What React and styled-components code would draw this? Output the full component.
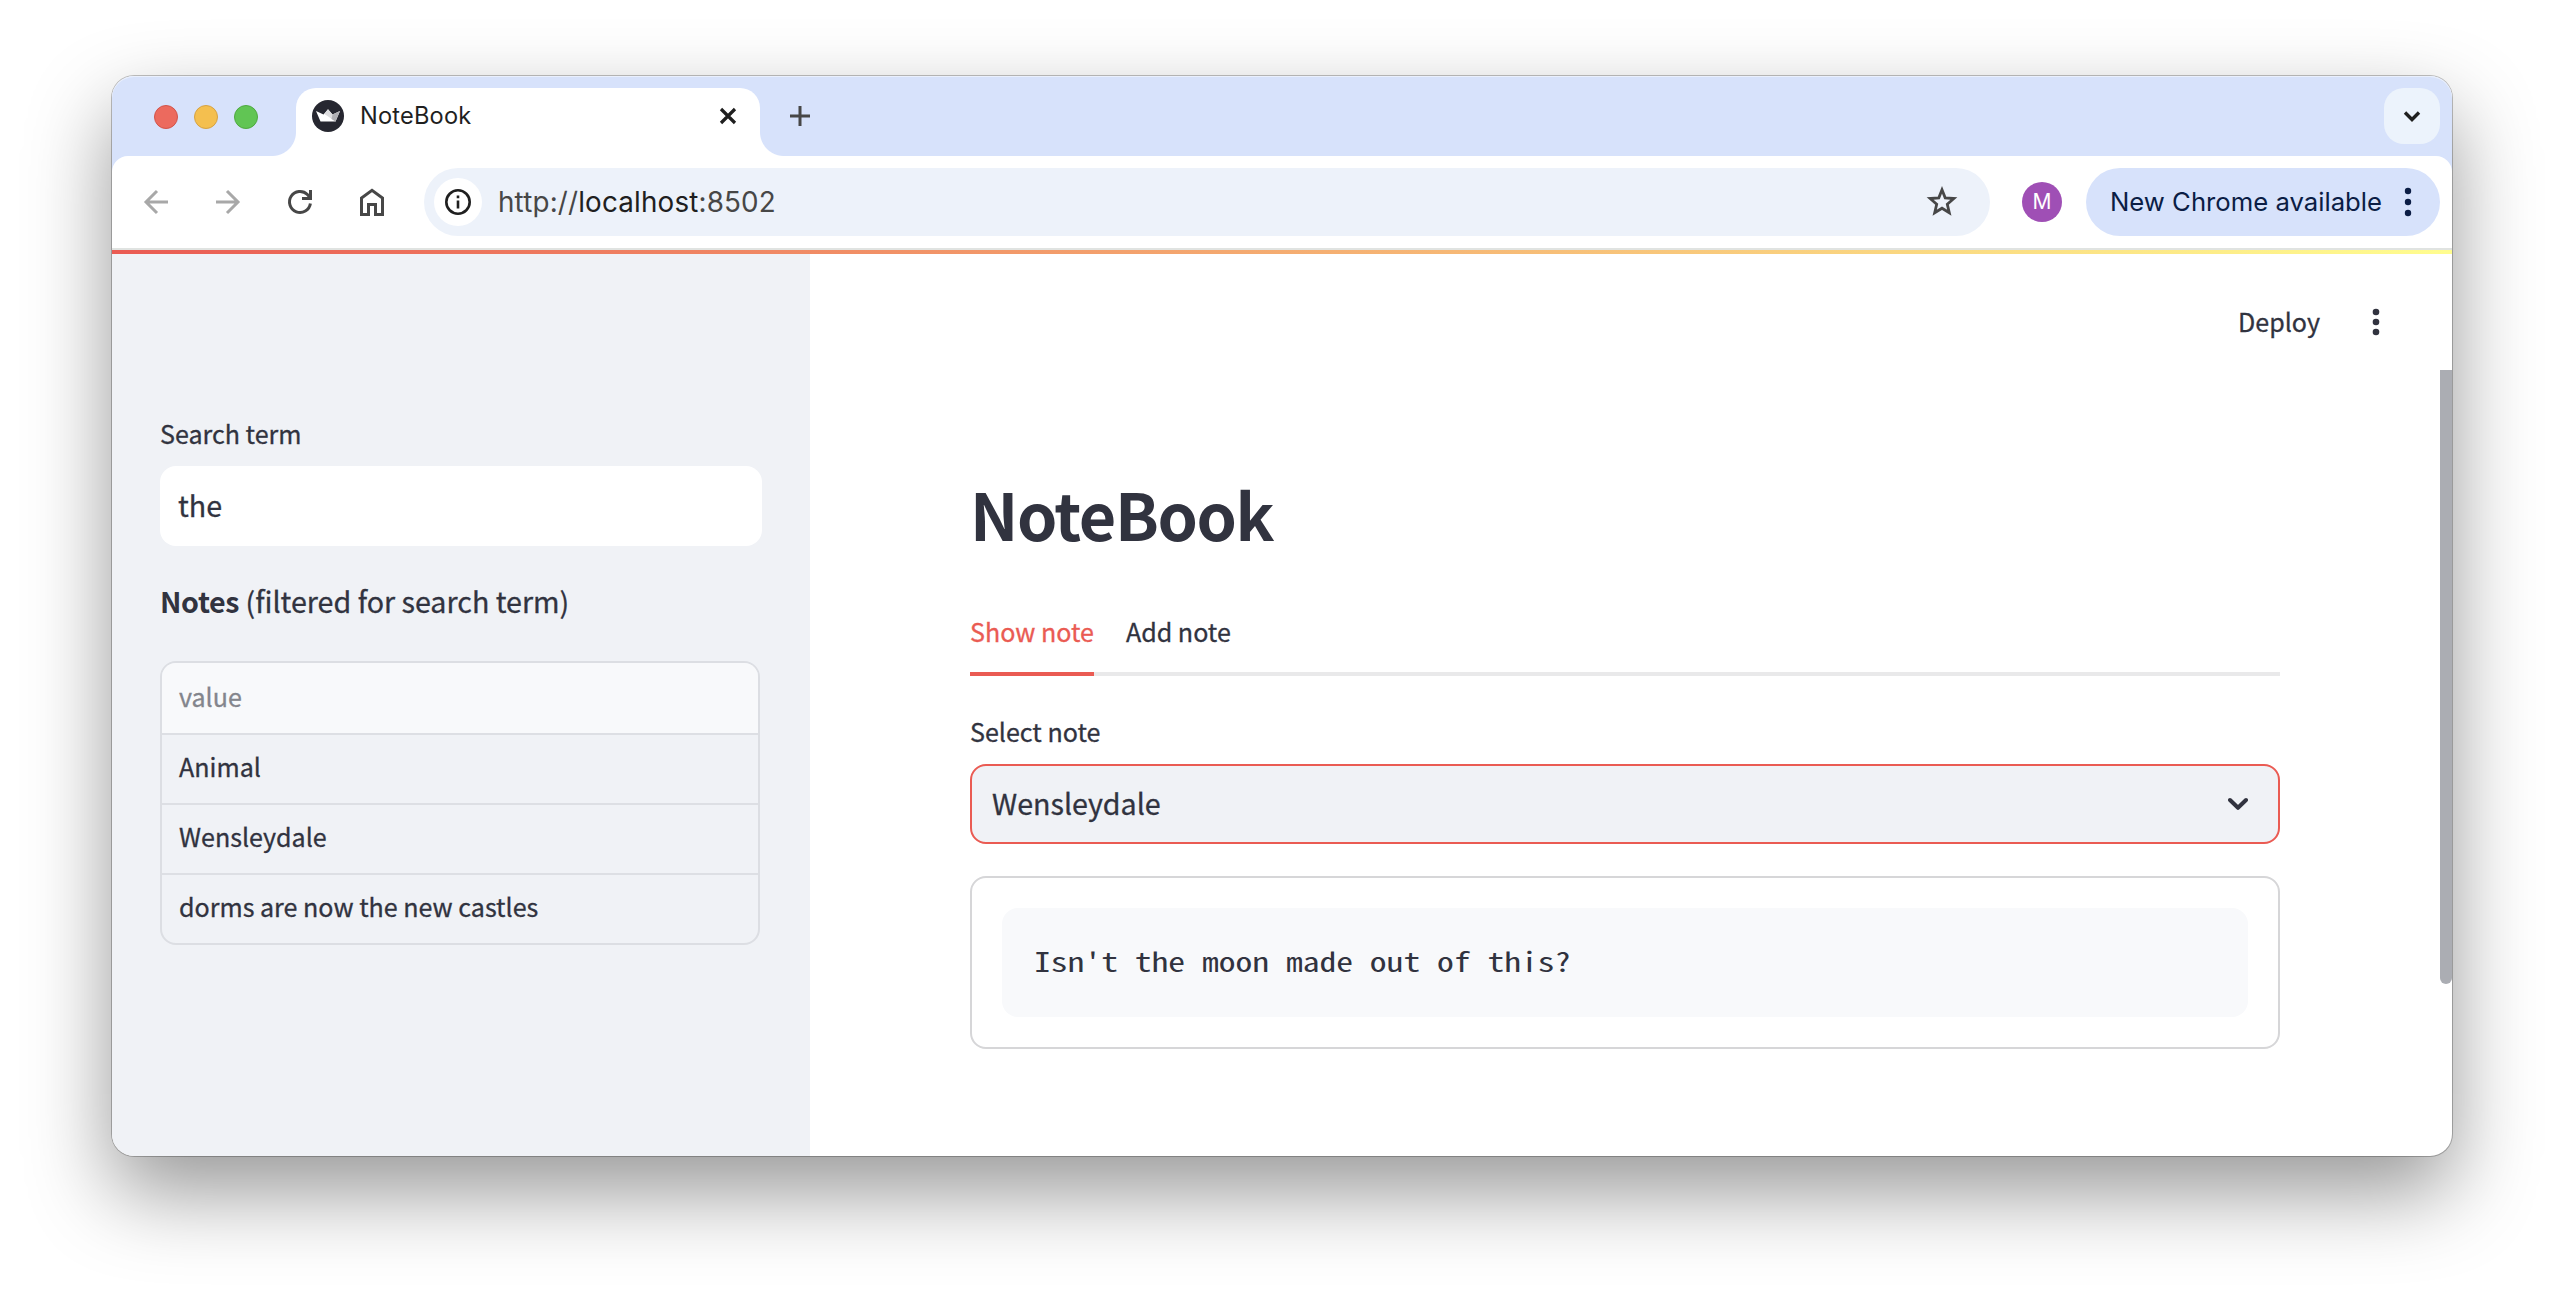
import React from "react";
import styled, { createGlobalStyle, css } from "styled-components";

const ui = `Inter, "Liberation Sans", sans-serif`;
const body = `"Noto Sans CJK SC", "Noto Sans", sans-serif`;
const mono = `"Noto Sans Mono CJK SC", "DejaVu Sans Mono", monospace`;

const ink = "#31333f";
const red = "#ea5b53";
const panel = "#f0f2f6";

const Global = createGlobalStyle`
  *, *::before, *::after { box-sizing: border-box; }
  html, body { margin: 0; background: #fff; }
`;

const Desktop = styled.div`
  width: 2564px;
  height: 1304px;
  padding: 76px 112px 0;
  overflow: hidden;
  background: #fff;
`;

const Window = styled.div`
  display: flex;
  flex-direction: column;
  height: 1080px;
  border-radius: 22px;
  background: #fff;
  box-shadow: 0 0 0 1px rgba(0, 0, 0, 0.24), 0 36px 84px rgba(0, 0, 0, 0.41);
`;

const TabStrip = styled.div`
  display: flex;
  height: 80px;
  padding: 12px 12px 0 42px;
  border-radius: 22px 22px 0 0;
  background: #d7e2fb;
  box-shadow: inset 0 1px 0 #eaf0fd;
`;

const Lights = styled.div`
  display: flex;
  gap: 16px;
  margin-top: 17px;
  width: 142px;
`;

const Light = styled.span`
  width: 24px;
  height: 24px;
  border-radius: 50%;
  background: ${(p) => p.$fill};
  border: 1px solid ${(p) => p.$edge};
`;

const foot = css`
  content: "";
  position: absolute;
  bottom: 0;
  width: 24px;
  height: 24px;
`;

const BrowserTab = styled.div`
  position: relative;
  display: flex;
  align-items: flex-start;
  width: 464px;
  height: 68px;
  padding: 12px 22px 0 16px;
  border-radius: 20px 20px 0 0;
  background: #fff;
  &::before {
    ${foot}
    left: -24px;
    background: radial-gradient(circle at 0 0, transparent 23.5px, #fff 24.5px);
  }
  &::after {
    ${foot}
    right: -24px;
    background: radial-gradient(circle at 100% 0, transparent 23.5px, #fff 24.5px);
  }
`;

const TabTitle = styled.span`
  flex: 1;
  margin-left: 16px;
  font: 400 23.6px/32px ${ui};
  letter-spacing: 0.2px;
  color: #1f1f1f;
`;

const CloseIcon = styled.svg`
  margin-top: 6px;
`;

const NewTab = styled.button`
  display: flex;
  padding: 0;
  margin: 18px auto 0 30px;
  height: 20px;
  border: 0;
  background: none;
`;

const TabSearch = styled.button`
  display: flex;
  align-items: center;
  justify-content: center;
  width: 56px;
  height: 56px;
  padding: 0;
  border: 0;
  border-radius: 20px;
  background: #ecf3fc;
`;

const ToolbarBack = styled.div`
  background: #d7e2fb;
`;

const Toolbar = styled.div`
  display: flex;
  align-items: center;
  height: 92px;
  padding: 0 12px 0 28px;
  border-radius: 16px 16px 0 0;
  background: #fff;
`;

const NavButtons = styled.div`
  display: flex;
  gap: 40px;
  width: 284px;
`;

const Address = styled.div`
  display: flex;
  align-items: center;
  width: 1566px;
  height: 68px;
  padding: 0 32px 0 10px;
  border-radius: 34px;
  background: #edf2fa;
`;

const SiteInfo = styled.span`
  display: flex;
  align-items: center;
  justify-content: center;
  width: 48px;
  height: 48px;
  border-radius: 50%;
  background: #fff;
`;

const Url = styled.span`
  flex: 1;
  margin-left: 16px;
  font: 400 27.8px/36px ${ui};
  letter-spacing: 0.17px;
  color: #474747;
`;

const Host = styled.span`
  color: #1f1f1f;
`;

const Avatar = styled.span`
  width: 40px;
  height: 40px;
  margin: 0 24px 0 32px;
  border-radius: 50%;
  background: #9f4fb5;
  color: #fff;
  text-align: center;
  font: 400 21px/40px ${ui};
`;

const UpdatePill = styled.button`
  display: flex;
  align-items: center;
  justify-content: space-between;
  width: 354px;
  height: 68px;
  padding: 0 28px 0 24px;
  border: 0;
  border-radius: 34px;
  background: #d7e2fb;
  color: #0b1d45;
  font: 400 25.7px/34px ${ui};
  white-space: nowrap;
`;

const Separator = styled.div`
  height: 2px;
  background: #e0e3e1;
`;

const Decoration = styled.div`
  height: 4px;
  background: linear-gradient(90deg, #ea5b53, #fffd8f);
`;

const Page = styled.div`
  display: flex;
  height: 902px;
  -webkit-text-stroke: 0.3px;
`;

const Sidebar = styled.aside`
  width: 698px;
  padding: 160px 48px 0;
  border-radius: 0 0 0 22px;
  background: ${panel};
  color: ${ink};
`;

const Label = styled.label`
  display: block;
  font: 400 25.07px/38px ${body};
  color: ${ink};
`;

const Input = styled.div`
  height: 80px;
  margin-top: 14px;
  padding: 0 18px;
  border-radius: 16px;
  background: #fff;
  font: 400 28.65px/77px ${body};
`;

const Caption = styled.p`
  margin: 31px 0 0;
  font: 400 28.65px/48px ${body};
  b { font-weight: 700; letter-spacing: -0.35px; -webkit-text-stroke: 0; }
`;

const Table = styled.div`
  width: 600px;
  height: 284px;
  margin-top: 36px;
  border: 2px solid #dcdee3;
  border-radius: 16px;
  overflow: hidden;
`;

const Row = styled.div`
  height: ${(p) => (p.$head ? 72 : 70)}px;
  padding: 0 17px;
  border-bottom: 2px solid #dddfe4;
  background: ${(p) => (p.$head ? "#f8f9fb" : "transparent")};
  color: ${(p) => (p.$head ? "#83858c" : ink)};
  font: 400 25.07px/${(p) => (p.$head ? 66 : 62)}px ${body};
  &:last-child { border-bottom: 0; }
`;

const Main = styled.main`
  flex: 1;
  display: flex;
  padding: 0 0 0 160px;
`;

const Content = styled.div`
  width: 1310px;
`;

const AppHeader = styled.header`
  display: flex;
  align-items: center;
  justify-content: flex-end;
  gap: 46px;
  height: 60px;
  margin: 38px -106px 0 0;
  color: ${ink};
`;

const Deploy = styled.span`
  padding-bottom: 2px;
  font: 400 25.07px/40px ${body};
`;

const Title = styled.h1`
  margin: 124px 0 0;
  font: 700 64.6px/75px ${body};
  letter-spacing: -1.4px;
  color: ${ink};
  -webkit-text-stroke: 0;
`;

const Tabs = styled.div`
  display: flex;
  gap: 32px;
  height: 80px;
  margin-top: 45px;
  box-shadow: inset 0 -4px 0 #e9e9ea;
`;

const PageTab = styled.div`
  height: 80px;
  font: 400 25.07px/70px ${body};
  color: ${(p) => (p.$active ? red : ink)};
  box-shadow: ${(p) => (p.$active ? `inset 0 -4px 0 ${red}` : "none")};
`;

const SelectLabel = styled(Label)`
  margin-top: 36px;
`;

const Select = styled.div`
  display: flex;
  align-items: center;
  justify-content: space-between;
  height: 80px;
  margin-top: 14px;
  padding: 0 30px 0 20px;
  border: 2px solid ${red};
  border-radius: 16px;
  background: ${panel};
  color: ${ink};
`;

const SelectValue = styled.span`
  padding-bottom: 3px;
  font: 400 28.65px/64px ${body};
`;

const Card = styled.div`
  height: 173px;
  margin-top: 32px;
  padding: 30px;
  border: 2px solid #d6d6d8;
  border-radius: 16px;
`;

const Code = styled.pre`
  height: 109px;
  margin: 0;
  padding: 0 32px;
  border-radius: 16px;
  background: #f8f9fb;
  color: ${ink};
  font: 400 26.4px/105px ${mono};
`;

const CodeText = styled.code`
  display: inline-block;
  font: inherit;
  transform: scaleX(1.2727);
  transform-origin: 0 50%;
  -webkit-text-stroke: 0;
`;

const ScrollThumb = styled.div`
  width: 12px;
  height: 614px;
  margin: 116px 0 0 auto;
  border-radius: 0 0 6px 6px;
  background: #abadb3;
`;

const rows = ["Animal", "Wensleydale", "dorms are now the new castles"];

const Nav = ({ children }) => (
  <svg width="32" height="32" viewBox="0 0 32 32" fill="none" strokeWidth="3">
    {children}
  </svg>
);

export default function App() {
  return (
    <Desktop>
      <Global />
      <Window>
        <TabStrip>
          <Lights>
            <Light $fill="#ec6a5e" $edge="#d2544a" />
            <Light $fill="#f4bf4f" $edge="#d6a243" />
            <Light $fill="#61c554" $edge="#4fa940" />
          </Lights>
          <BrowserTab>
            <svg width="32" height="32" viewBox="0 0 32 32">
              <circle cx="16" cy="16" r="16" fill="#262730" />
              <path d="M4 11l7.500 3.500L16 9.300l4.500 5.200L28 11l-4.500 10.500h-15z" fill="#fff" />
              <path d="M16 9.300l4.500 5.200 3 7L12.500 14z" fill="#dcdcde" />
              <path d="M28 11l-7.500 3.500-1 4.500 4 2.500z" fill="#b0b0b4" />
            </svg>
            <TabTitle>NoteBook</TabTitle>
            <CloseIcon width="20" height="20" viewBox="0 0 20 20" stroke="#1f1f1f" strokeWidth="3.200">
              <path d="M3 3l14 14M17 3L3 17" />
            </CloseIcon>
          </BrowserTab>
          <NewTab>
            <svg width="20" height="20" viewBox="0 0 20 20" stroke="#474747" strokeWidth="3">
              <path d="M10 0v20M0 10h20" />
            </svg>
          </NewTab>
          <TabSearch>
            <svg width="20" height="20" viewBox="0 0 20 20" fill="none" stroke="#1f1f1f" strokeWidth="3.400">
              <path d="M3 6.500l7 7 7-7" />
            </svg>
          </TabSearch>
        </TabStrip>
        <ToolbarBack>
          <Toolbar>
            <NavButtons>
              <Nav><path stroke="#a8a8a8" d="M28 16H6.500M17 5L6 16l11 11" /></Nav>
              <Nav><path stroke="#a8a8a8" d="M4 16h21.500M15 5l11 11-11 11" /></Nav>
              <Nav>
                <path stroke="#474747" d="M26.400 17.500a10.500 10.500 0 1 1-3-9L26 11.500M26.500 4v8.500H18" />
              </Nav>
              <Nav>
                <path stroke="#474747" d="M5.500 28.500V12L16 4.300 26.500 12v16.500h-7V18.500h-7v10z" />
              </Nav>
            </NavButtons>
            <Address>
              <SiteInfo>
                <svg width="28" height="28" viewBox="0 0 28 28" fill="none" stroke="#1f1f1f" strokeWidth="2.600">
                  <circle cx="14" cy="14" r="11.700" />
                  <path d="M14 12.500v8M14 7.500v2.800" />
                </svg>
              </SiteInfo>
              <Url>http://<Host>localhost</Host>:8502</Url>
              <svg width="32" height="32" viewBox="0 0 32 32" fill="none" stroke="#474747" strokeWidth="2.800">
                <path d="M16 3.800l3.200 8 8.700.7-6.600 5.700 2 8.500L16 22.200l-7.300 4.500 2-8.500-6.600-5.700 8.700-.7z" />
              </svg>
            </Address>
            <Avatar>M</Avatar>
            <UpdatePill>
              New Chrome available
              <svg width="8" height="32" viewBox="0 0 8 32" fill="#0b1d45">
                <circle cx="4" cy="5" r="3.200" />
                <circle cx="4" cy="16" r="3.200" />
                <circle cx="4" cy="27" r="3.200" />
              </svg>
            </UpdatePill>
          </Toolbar>
        </ToolbarBack>
        <Separator />
        <Decoration />
        <Page>
          <Sidebar>
            <Label>Search term</Label>
            <Input>the</Input>
            <Caption><b>Notes</b> (filtered for search term)</Caption>
            <Table>
              <Row $head>value</Row>
              {rows.map((r) => <Row key={r}>{r}</Row>)}
            </Table>
          </Sidebar>
          <Main>
            <Content>
              <AppHeader>
                <Deploy>Deploy</Deploy>
                <svg width="20" height="32" viewBox="0 0 20 32" fill={ink}>
                  <circle cx="10" cy="6" r="3.300" />
                  <circle cx="10" cy="16" r="3.300" />
                  <circle cx="10" cy="26" r="3.300" />
                </svg>
              </AppHeader>
              <Title>NoteBook</Title>
              <Tabs>
                <PageTab $active>Show note</PageTab>
                <PageTab>Add note</PageTab>
              </Tabs>
              <SelectLabel>Select note</SelectLabel>
              <Select>
                <SelectValue>Wensleydale</SelectValue>
                <svg width="20" height="20" viewBox="0 0 20 20" fill="none" stroke={ink} strokeWidth="4" strokeLinecap="round" strokeLinejoin="round">
                  <path d="M2 6l8 7.800L18 6" />
                </svg>
              </Select>
              <Card>
                <Code><CodeText>Isn't the moon made out of this?</CodeText></Code>
              </Card>
            </Content>
            <ScrollThumb />
          </Main>
        </Page>
      </Window>
    </Desktop>
  );
}
